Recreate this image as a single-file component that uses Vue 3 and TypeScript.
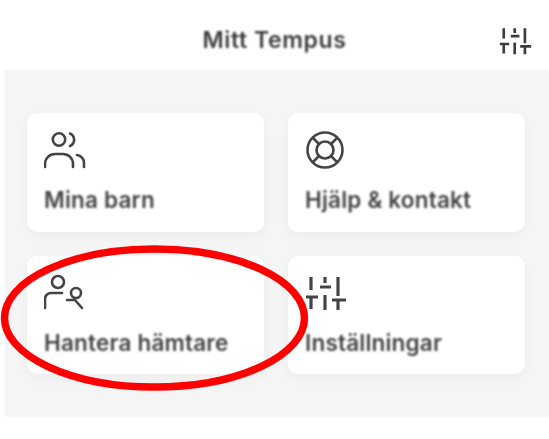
<script setup lang="ts">
const cards = [
  { label: 'Mina barn', icon: 'kids' },
  { label: 'Hjälp & kontakt', icon: 'help' },
  { label: 'Hantera hämtare', icon: 'pickup' },
  { label: 'Inställningar', icon: 'settings' },
];

// same slider glyph in the top bar and in the settings card
const sliderPath =
  'M6 3v13M1 23h12M6 23v12M20 3v6M15 13h11M20 21v15M33 3v19M27 26h14M33 26v10';
</script>

<template>
  <div class="screen">
    <header class="top-bar">
      <span class="title">Mitt Tempus</span>
      <svg class="top-icon" viewBox="0 0 42 37" fill="none">
        <path :d="sliderPath" />
      </svg>
    </header>

    <main class="panel">
      <div class="grid">
        <div v-for="card in cards" :key="card.label" class="card">
          <svg class="icon" viewBox="0 0 44 38" fill="none">
            <template v-if="card.icon === 'kids'">
              <circle cx="15" cy="8.5" r="6.2" />
              <path d="M1 36v-3a10 10 0 0 1 10-10h8a10 10 0 0 1 10 10v3" />
              <path d="M26 2.5a6.8 6.8 0 0 1 0 12.5M33 24a8 8 0 0 1 7 8v4" />
            </template>
            <template v-else-if="card.icon === 'help'">
              <circle cx="20" cy="19" r="17.5" />
              <circle cx="20" cy="19" r="8.5" />
              <path d="M8 7l6 6M32 7l-6 6M8 31l6-6M32 31l-6-6" />
            </template>
            <template v-else-if="card.icon === 'pickup'">
              <circle cx="14" cy="8" r="6" />
              <path d="M1 34v-9a6 6 0 0 1 6-6h11" />
              <circle cx="32" cy="19" r="5" />
              <path d="M23 26h8l7 8" />
            </template>
            <template v-else>
              <path class="slider" :d="sliderPath" />
            </template>
          </svg>
          <span class="label">{{ card.label }}</span>
        </div>
      </div>
    </main>

    <div class="footer" />

    <svg class="ring" viewBox="0 0 311 152" fill="none">
      <ellipse cx="154.5" cy="73" rx="150" ry="69" />
    </svg>
  </div>
</template>

<style>
html,
body {
  margin: 0;
  background: #fff;
}
</style>

<style scoped>
.screen {
  position: relative;
  width: 549px;
  height: 439px;
  overflow: hidden;
  background: #fff;
  font-family: Inter, "Liberation Sans", sans-serif;
}

.top-bar {
  position: relative;
  height: 70px;
  display: flex;
  align-items: center;
  justify-content: center;
  box-sizing: border-box;
  padding-top: 10px;
}

.title {
  font-size: 23px;
  font-weight: 600;
  letter-spacing: 0.6px;
  color: #3c3c3c;
  filter: blur(0.8px);
}

.top-icon {
  position: absolute;
  right: 17px;
  top: 26px;
  width: 33px;
  height: 29px;
  stroke: #3c3c3c;
  stroke-width: 3.4;
  filter: blur(0.7px);
}

.panel {
  margin-left: 5px;
  height: 347px;
  padding: 43px 24px 0 22px;
  box-sizing: border-box;
  background: #f5f5f5;
}

.grid {
  display: grid;
  grid-template-columns: 237px 237px;
  grid-template-rows: 119px 118px;
  gap: 24px;
}

.card {
  display: flex;
  flex-direction: column;
  align-items: flex-start;
  padding: 18px 16px 0 17px;
  box-sizing: border-box;
  background: #fff;
  border-radius: 10px;
  box-shadow: 0 4px 14px rgba(0, 0, 0, 0.04);
}

.icon {
  width: 44px;
  height: 38px;
  stroke: #444;
  stroke-width: 2.6;
  stroke-linecap: round;
  filter: blur(0.7px);
}

.slider {
  stroke-width: 3.2;
  stroke-linecap: butt;
}

.label {
  margin-top: 16px;
  font-size: 22.5px;
  line-height: 29px;
  font-weight: 600;
  letter-spacing: 0.2px;
  color: #444;
  filter: blur(0.9px);
}

.ring {
  position: absolute;
  left: 0;
  top: 245px;
  width: 311px;
  height: 152px;
  stroke: #f00;
  stroke-width: 7.5;
}
</style>
